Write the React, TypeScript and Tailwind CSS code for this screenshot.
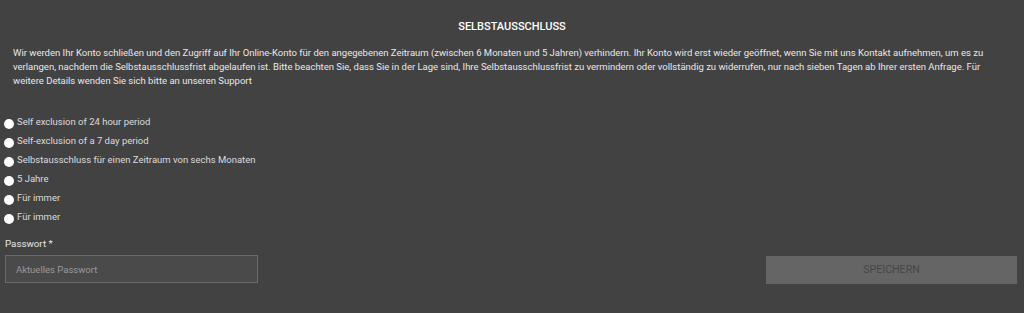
const options = [
  "Self exclusion of 24 hour period",
  "Self-exclusion of a 7 day period",
  "Selbstausschluss für einen Zeitraum von sechs Monaten",
  "5 Jahre",
  "Für immer",
  "Für immer",
];

export default function App() {
  return (
    <div
      className="min-h-[313px] bg-[#424242] text-[#e6e6e6] pt-[20px]"
      style={{ fontFamily: "Roboto, 'Liberation Sans', sans-serif" }}
    >
      <h2 className="text-center text-[11px] leading-[13px] font-medium text-white">
        SELBSTAUSSCHLUSS
      </h2>
      <p className="mt-[13px] pl-[13px] pr-[24px] text-[9.5px] leading-[14px] text-[#e8e8e8]">
        Wir werden Ihr Konto schließen und den Zugriff auf Ihr Online-Konto für den angegebenen Zeitraum (zwischen 6 Monaten und 5 Jahren) verhindern. Ihr Konto wird erst wieder geöffnet, wenn Sie mit uns Kontakt aufnehmen, um es zu verlangen, nachdem die Selbstausschlussfrist abgelaufen ist. Bitte beachten Sie, dass Sie in der Lage sind, Ihre Selbstausschlussfrist zu vermindern oder vollständig zu widerrufen, nur nach sieben Tagen ab Ihrer ersten Anfrage. Für weitere Details wenden Sie sich bitte an unseren Support
      </p>

      <ul className="mt-[25px] pl-[4px]">
        {options.map((label, i) => (
          <li key={i} className="flex h-[19px] items-center gap-[3px] text-[9.5px] text-[#dcdcdc]">
            <span className="mt-[2px] h-[10px] w-[10px] shrink-0 rounded-full bg-white" />
            <span>{label}</span>
          </li>
        ))}
      </ul>

      <div className="mt-[10px] flex items-end justify-between pl-[5px] pr-[7px]">
        <div className="w-[253px]">
          <label className="block text-[9.75px] leading-[14px] text-[#e6e6e6]">Passwort *</label>
          <input
            type="password"
            placeholder="Aktuelles Passwort"
            className="mt-[4px] h-[28px] w-full border border-[#6a6a6a] bg-[#4a4a4a] px-[10px] text-[9.5px] text-white placeholder:text-[#9a9a9a] outline-none"
          />
        </div>
        <button
          type="button"
          className="mb-[-1px] h-[28px] w-[251px] bg-[#656565] text-[10.6px] text-[#454545]"
        >
          SPEICHERN
        </button>
      </div>
    </div>
  );
}
